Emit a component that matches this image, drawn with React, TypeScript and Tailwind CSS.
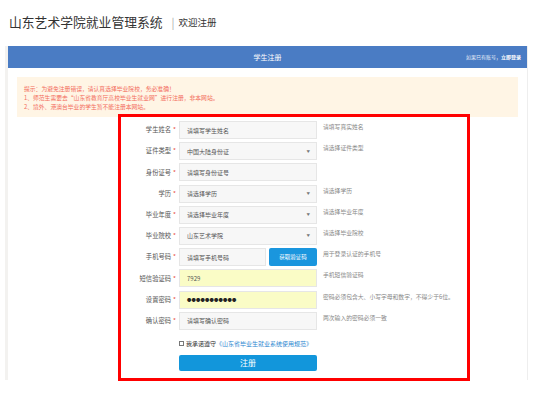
import React from "react";

const font = { fontFamily: '"Noto Sans CJK SC", "Liberation Sans", sans-serif' };

interface Row {
  label: string;
  kind: "input" | "select" | "phone" | "filled" | "password";
  value: string;
  hint?: string;
}

const rows: Row[] = [
  { label: "学生姓名", kind: "input", value: "请填写学生姓名", hint: "请填写真实姓名" },
  { label: "证件类型", kind: "select", value: "中国大陆身份证", hint: "请选择证件类型" },
  { label: "身份证号", kind: "input", value: "请填写身份证号" },
  { label: "学历", kind: "select", value: "请选择学历", hint: "请选择学历" },
  { label: "毕业年度", kind: "select", value: "请选择毕业年度", hint: "请选择毕业年度" },
  { label: "毕业院校", kind: "select", value: "山东艺术学院", hint: "请选择毕业院校" },
  { label: "手机号码", kind: "phone", value: "请填写手机号码", hint: "用于登录认证的手机号" },
  { label: "短信验证码", kind: "filled", value: "7929", hint: "手机短信验证码" },
  { label: "设置密码", kind: "password", value: "●●●●●●●●●●●", hint: "密码必须包含大、小写字母和数字，不得少于6位。" },
  { label: "确认密码", kind: "input", value: "请填写确认密码", hint: "两次输入的密码必须一致" },
];

function Field({ row }: { row: Row }) {
  if (row.kind === "phone") {
    return (
      <div className="flex w-[138px] h-[18px] gap-[3px]">
        <div className="flex-1 flex items-center pl-[7px] bg-[#f7f7f7] border border-[#e6e6e6] text-[6px] text-[#555]">
          {row.value}
        </div>
        <div className="w-[48px] flex items-center justify-center bg-[#1a96de] rounded-[2px] text-[5.5px] text-white">
          获取验证码
        </div>
      </div>
    );
  }
  const yellow = row.kind === "filled" || row.kind === "password";
  return (
    <div
      className={`w-[138px] h-[18px] flex items-center justify-between pl-[7px] pr-[6px] border border-[#e6e6e6] ${
        yellow ? "bg-[#fafcc6]" : "bg-[#f7f7f7]"
      } ${row.kind === "password" ? "text-[4.3px] text-[#222] tracking-[0.2px]" : "text-[6px] text-[#555]"}`}
    >
      <span>{row.value}</span>
      {row.kind === "select" && <span className="text-[3.5px] text-[#777]">▼</span>}
    </div>
  );
}

export default function App() {
  return (
    <div className="w-[550px] h-[404px] overflow-hidden bg-white" style={font}>
      <div className="h-[46px] flex items-center pl-[9px] pb-[2px]">
        <span className="text-[12.8px] text-[#333]">山东艺术学院就业管理系统</span>
        <span className="ml-[9px] text-[11px] text-[#aaa]">|</span>
        <span className="ml-[4px] text-[9.5px] text-[#333]">欢迎注册</span>
      </div>

      <div className="ml-[5px] w-[523px] h-[334px] border-l-[3px] border-l-[#f3f2f0] border-r border-r-[#eeeeee]">
        <div className="relative h-[22px] bg-[#4a7cc4] flex items-center justify-center">
          <span className="text-[7px] text-white">学生注册</span>
          <span className="absolute right-[6px] top-[7px] text-[5px] text-[#e8eef8]">
            如果已有账号，<span className="font-bold text-white">立即登录</span>
          </span>
        </div>

        <div className="mx-[9px] mt-[9px] h-[40px] bg-[#fff5e5] pl-[7px] pt-[7px] text-[5.8px] leading-[9px] text-[#f36c5c]">
          <div>提示：为避免注册错误，请认真选择毕业院校，务必准确！</div>
          <div>1、师范生需要去“山东省教育厅高校毕业生就业网”进行注册，非本网站。</div>
          <div>2、境外、港澳台毕业的学生暂不能注册本网站。</div>
        </div>

        <div className="ml-[110px] -mt-[3px] w-[352px] h-[267px] border-[3px] border-[#ff0000] pt-[4px]">
          <div className="flex flex-col gap-[3.2px]">
            {rows.map((row) => (
              <div key={row.label} className="flex items-start">
                <div className="w-[55px] h-[18px] flex items-center justify-end text-[6.3px] text-[#555]">
                  {row.label}
                  <span className="ml-[2px] text-[#e84c3d]">*</span>
                </div>
                <div className="ml-[3px]">
                  <Field row={row} />
                </div>
                {row.hint && (
                  <div className="ml-[6px] pt-[2px] text-[5.8px] text-[#888] whitespace-nowrap">{row.hint}</div>
                )}
              </div>
            ))}
          </div>

          <div className="ml-[58px] mt-[9px] flex items-center text-[6px]">
            <span className="w-[5px] h-[5px] border border-[#777] bg-white" />
            <span className="ml-[2px] text-[#333]">我承诺遵守</span>
            <span className="text-[#2a86d0]">《山东省毕业生就业系统使用规范》</span>
          </div>

          <div className="ml-[58px] mt-[7px] w-[138px] h-[16px] rounded-[2px] bg-[#1296db] flex items-center justify-center text-[8px] text-white">
            注册
          </div>
        </div>
      </div>

      <div className="mt-[20px] pl-[48px] text-[18px] text-[#333] whitespace-nowrap">
        在线注册流程说明及注意事项如下所示
      </div>
    </div>
  );
}
